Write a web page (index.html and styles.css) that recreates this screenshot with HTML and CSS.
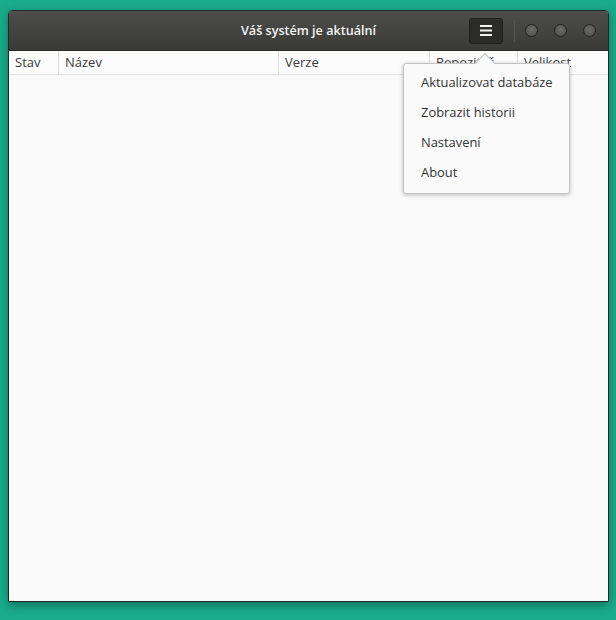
FILE: index.html
```html
<!DOCTYPE html>
<html lang="cs">
<head>
<meta charset="utf-8">
<title>Pamac</title>
<link rel="stylesheet" href="styles.css">
</head>
<body>
<div class="desktop">
  <div class="window">
    <header class="titlebar">
      <div class="title">Váš systém je aktuální</div>
      <div class="controls">
        <button class="menu-btn" aria-label="Menu">
          <svg width="12" height="11" viewBox="0 0 12 11"><rect x="0" y="0" width="12" height="2" fill="#f2f2f2"/><rect x="0" y="4.5" width="12" height="2" fill="#f2f2f2"/><rect x="0" y="9" width="12" height="2" fill="#f2f2f2"/></svg>
        </button>
        <span class="sep"></span>
        <span class="wbtn"></span>
        <span class="wbtn"></span>
        <span class="wbtn"></span>
      </div>
    </header>
    <div class="columns">
      <div class="col c1">Stav</div>
      <div class="col c2">Název</div>
      <div class="col c3">Verze</div>
      <div class="col c4">Repozitář</div>
      <div class="col c5">Velikost</div>
    </div>
    <div class="content"></div>
    <div class="popover">
      <div class="arrow"></div>
      <ul class="menu">
        <li>Aktualizovat databáze</li>
        <li>Zobrazit historii</li>
        <li>Nastavení</li>
        <li>About</li>
      </ul>
    </div>
  </div>
</div>
</body>
</html>
```

FILE: styles.css
```css
* { box-sizing: border-box; }
html, body { margin: 0; padding: 0; }
body {
  width: 616px;
  height: 620px;
  background: #1aab8b;
  font-family: "Open Sans", "DejaVu Sans", sans-serif;
  overflow: hidden;
}
.desktop {
  padding: 10px 7px 0 8px;
}
.window {
  position: relative;
  width: 601px;
  height: 592px;
  background: #fafafa;
  border: 1px solid #1b2b27;
  border-radius: 4px 4px 0 0;
  box-shadow: 0 3px 10px rgba(0,0,0,0.35);
  display: flex;
  flex-direction: column;
}
.titlebar {
  height: 40px;
  flex: none;
  background: linear-gradient(#4d4d4b, #3a3a38);
  border-radius: 3px 3px 0 0;
  position: relative;
  display: flex;
  align-items: center;
  justify-content: flex-end;
  border-bottom: 1px solid #2a2a28;
}
.title {
  position: absolute;
  left: 0; right: 0;
  text-align: center;
  color: #f4f4f4;
  font-weight: 600;
  font-size: 12.6px;
  top: 11px;
}
.controls {
  position: relative;
  display: flex;
  align-items: center;
  padding-right: 7px;
}
.menu-btn {
  width: 34px;
  height: 26px;
  border: 1px solid #1f1f1e;
  border-radius: 3px;
  background: #2b2b2a;
  display: flex;
  align-items: center;
  justify-content: center;
  padding: 0;
  margin-right: 11px;
  box-shadow: inset 0 1px 0 rgba(255,255,255,0.04);
}
.sep {
  width: 1px;
  height: 22px;
  background: #2c2c2b;
  border-right: 1px solid #555553;
  margin-right: 2px;
}
.wbtn {
  width: 13px;
  height: 13px;
  border-radius: 50%;
  background: radial-gradient(circle at 50% 40%, #6c6c69, #4c4c4a);
  border: 1px solid #222;
  margin: 0 8px;
}
.wbtn:last-child { margin-right: 5px; }
.columns {
  height: 24px;
  flex: none;
  display: flex;
  border-bottom: 1px solid #e2e2e2;
  background: #fcfcfc;
  font-size: 13px;
  color: #3a3a3a;
}
.col {
  padding: 2px 6px 0 6px;
  border-right: 1px solid #dedede;
  white-space: nowrap;
  overflow: hidden;
}
.c1 { width: 50px; }
.c2 { width: 220px; }
.c3 { width: 151px; }
.c4 { width: 88px; }
.c5 { flex: 1; border-right: none; }
.content { flex: 1; }
.popover {
  position: absolute;
  left: 394px;
  top: 52px;
  width: 167px;
  height: 131px;
  background: #fafafa;
  border: 1px solid #c3c3c3;
  border-radius: 3px;
  box-shadow: 0 1px 4px rgba(0,0,0,0.25);
}
.arrow {
  position: absolute;
  top: -8px;
  left: 74px;
  width: 14px;
  height: 14px;
  background: #fafafa;
  border-left: 1px solid #c3c3c3;
  border-top: 1px solid #c3c3c3;
  transform: rotate(45deg);
}
.menu {
  position: relative;
  list-style: none;
  margin: 0;
  padding: 8px 0 0 0;
}
.menu li {
  height: 30px;
  line-height: 20px;
  padding-left: 17px;
  font-size: 12.9px;
  color: #333;
}
```
